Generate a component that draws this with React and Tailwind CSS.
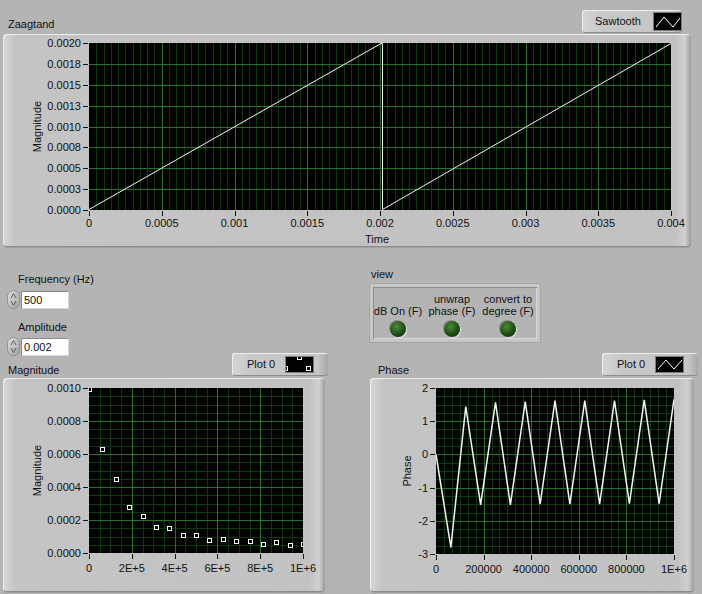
import React from "react";

const FONT = "Liberation Sans, Arial, sans-serif";

// grid lines between two major positions
const subdivide = (arr, n) => {
  const out = [];
  for (let i = 0; i < arr.length - 1; i++)
    for (let k = 1; k < n; k++) out.push(arr[i] + ((arr[i + 1] - arr[i]) * k) / n);
  return out;
};
const crisp = (v) => Math.round(v) + 0.5;

function Chart({ id, w, h, plot, xTicks, yTicks, xMinor, yMinor, yTitle, yTitleX, xTitle, labelY, children }) {
  const { x, y, w: pw, h: ph } = plot;
  const xs = xTicks.map((_, i) => x + (pw * i) / (xTicks.length - 1));
  const ys = yTicks.map((_, i) => y + ph - (ph * i) / (yTicks.length - 1));
  return (
    <svg width={w} height={h} className="block" fontFamily={FONT} fontSize="11">
      <defs>
        <clipPath id={id}>
          <rect x={x} y={y} width={pw} height={ph} />
        </clipPath>
      </defs>
      <rect x={x} y={y} width={pw} height={ph} fill="#010301" />
      <g shapeRendering="crispEdges">
        {subdivide(xs, xMinor).map((v, i) => (
          <line key={"a" + i} x1={crisp(v)} x2={crisp(v)} y1={y} y2={y + ph} stroke="#103810" />
        ))}
        {subdivide(ys, yMinor).map((v, i) => (
          <line key={"b" + i} y1={crisp(v)} y2={crisp(v)} x1={x} x2={x + pw} stroke="#103810" />
        ))}
        {xs.slice(1, -1).map((v, i) => (
          <line key={"c" + i} x1={crisp(v)} x2={crisp(v)} y1={y} y2={y + ph} stroke="#2a6f2a" />
        ))}
        {ys.slice(1, -1).map((v, i) => (
          <line key={"d" + i} y1={crisp(v)} y2={crisp(v)} x1={x} x2={x + pw} stroke="#2a6f2a" />
        ))}
        {xs.map((v, i) => (
          <line key={"e" + i} x1={crisp(v)} x2={crisp(v)} y1={y + ph + 1} y2={y + ph + 6} stroke="#111" />
        ))}
        {ys.map((v, i) => (
          <line key={"f" + i} y1={crisp(v)} y2={crisp(v)} x1={x - 6} x2={x - 1} stroke="#111" />
        ))}
      </g>
      <g clipPath={`url(#${id})`}>
        <g transform={`translate(${x} ${y})`}>{children}</g>
      </g>
      {xTicks.map((t, i) => (
        <text key={"x" + i} x={xs[i]} y={labelY} textAnchor="middle" fill="#111">
          {t}
        </text>
      ))}
      {yTicks.map((t, i) => (
        <text key={"y" + i} x={x - 8} y={ys[i] + 4} textAnchor="end" fill="#111">
          {t}
        </text>
      ))}
      <text transform={`translate(${yTitleX} ${y + ph / 2}) rotate(-90)`} textAnchor="middle" dy="0.35em" fill="#111">
        {yTitle}
      </text>
      {xTitle && (
        <text x={x + pw / 2 - 3} y={h - 4} textAnchor="middle" fill="#111">
          {xTitle}
        </text>
      )}
    </svg>
  );
}

function Frame({ className, children }) {
  return (
    <div
      className={`rounded-[4px] bg-[linear-gradient(90deg,#d8d8d8,#c4c4c4_12px,#c2c2c2_calc(100%_-_16px),#d0d0d0_calc(100%_-_6px),#9c9c9c)] shadow-[inset_1px_1px_0_#ececec,inset_0_-1px_0_#8a8a8a,0_1px_0_#a2a2a2] ${className}`}
    >
      {children}
    </div>
  );
}

function Legend({ label, className, textClass, swatchClass, children }) {
  return (
    <div
      className={`relative flex items-center h-[23px] rounded-[3px] bg-[linear-gradient(90deg,#d4d4d4,#c8c8c8_20px,#c6c6c6_calc(100%_-_10px),#a8a8a8)] shadow-[inset_1px_1px_0_#eeeeee,inset_0_-1px_0_#8c8c8c] ${className}`}
    >
      <span className={textClass}>{label}</span>
      <div className={`bg-black border border-[#7c7c7c] ${swatchClass}`}>{children}</div>
    </div>
  );
}

function NumCtl({ value, className }) {
  return (
    <div className={`flex items-center ${className}`}>
      <svg width="13" height="19" viewBox="0 0 13 19" className="block">
        <defs>
          <linearGradient id="spin" x1="0" y1="0" x2="1" y2="1">
            <stop offset="0" stopColor="#e2e2e2" />
            <stop offset="1" stopColor="#9e9e9e" />
          </linearGradient>
        </defs>
        <rect x="0.5" y="0.5" width="12" height="18" rx="6" fill="url(#spin)" stroke="#909090" />
        <path d="M4 8 L6.5 3.5 L9 8" fill="none" stroke="#5a5a5a" />
        <path d="M4 11 L6.5 15.5 L9 11" fill="none" stroke="#5a5a5a" />
        <line x1="2" x2="11" y1="9.5" y2="9.5" stroke="#c8c8c8" />
      </svg>
      <div className="ml-[1px] w-[47px] h-[17px] bg-white border-t border-l border-[#8a8a8a] shadow-[1px_1px_0_#d6d6d6] pl-[2px] pt-[2px]">
        {value}
      </div>
    </div>
  );
}

function Led({ lines, w }) {
  return (
    <div className={`flex flex-col items-center ${w}`}>
      <div className="text-center leading-[12px] whitespace-nowrap">
        {lines.map((l) => (
          <div key={l}>{l}</div>
        ))}
      </div>
      <div className="mt-[4px] w-[16px] h-[16px] rounded-full bg-[radial-gradient(circle_at_40%_35%,#4f8c3a,#1f4d15_55%,#0e2a08)] shadow-[1px_1px_1px_#e6e6e6,-1px_-1px_0_#8a8a8a]" />
    </div>
  );
}

const magnitudeY = [1, 61.3, 91.3, 118.7, 128.3, 139.3, 140.3, 147.3, 146.7, 151.7, 150.7, 153.3, 153.3, 155.7, 154.3, 157.3, 156.3];
const phaseY = [0, -2.8, 1.44, -1.52, 1.57, -1.52, 1.59, -1.5, 1.62, -1.5, 1.62, -1.5, 1.62, -1.48, 1.64, -1.48, 1.66];

export default function App() {
  return (
    <div className="w-[702px] h-[594px] overflow-hidden bg-[#b4b4b4] text-[11px] leading-[13px] text-[#111] font-['Liberation_Sans',Arial,sans-serif]">
      {/* Zaagtand */}
      <div className="flex items-end justify-between h-[34px] pl-[8px] pr-[20px]">
        <span className="mb-[3px]">Zaagtand</span>
        <Legend
          label="Sawtooth"
          className="w-[100px] mb-[1px]"
          textClass="ml-[13px] w-[58px]"
          swatchClass="w-[29px] h-[19px]"
        >
          <svg width="27" height="17" className="block">
            <polyline points="2,14 10,4 19,14 26,5" fill="none" stroke="#fff" strokeWidth="1" />
          </svg>
        </Legend>
      </div>
      <Frame className="ml-[3px] w-[688px] h-[213px]">
        <Chart
          id="saw"
          w={688}
          h={213}
          plot={{ x: 86, y: 9, w: 582, h: 167 }}
          xTicks={["0", "0.0005", "0.001", "0.0015", "0.002", "0.0025", "0.003", "0.0035", "0.004"]}
          yTicks={["0.0000", "0.0003", "0.0005", "0.0008", "0.0010", "0.0013", "0.0015", "0.0018", "0.0020"]}
          xMinor={10}
          yMinor={1}
          yTitle="Magnitude"
          yTitleX={34.5}
          xTitle="Time"
          labelY={193}
        >
          <polyline points="0,166.5 292,0.5 293.5,0.5 293.5,166.5 582,0.5" fill="none" stroke="#f4f4f4" strokeWidth="1" />
        </Chart>
      </Frame>

      {/* controls */}
      <div className="flex h-[106px]">
        <div className="w-[345px] pl-[7px] pt-[26px]">
          <div className="ml-[11px]">Frequency (Hz)</div>
          <NumCtl value="500" className="mt-[4px]" />
          <div className="ml-[11px] mt-[12px]">Amplitude</div>
          <NumCtl value="0.002" className="mt-[3px]" />
        </div>
        <div className="ml-[25px] pt-[21px]">
          <div className="ml-[1px]">view</div>
          <div className="mt-[3px] w-[170px] h-[58px] border-[3px] border-[#c6c6c6] shadow-[inset_1px_1px_0_#8e8e8e,inset_-1px_-1px_0_#dadada,0_0_0_1px_#a6a6a6] flex items-end pb-[2px]">
            <Led lines={["dB On (F)"]} w="w-[50px]" />
            <Led lines={["unwrap", "phase (F)"]} w="w-[58px]" />
            <Led lines={["convert to", "degree (F)"]} w="w-[54px]" />
          </div>
        </div>
      </div>

      {/* spectra */}
      <div className="flex">
        <div className="w-[345px]">
          <div className="flex justify-between h-[25px] pl-[8px] pr-[17px]">
            <span className="self-end mb-[1px]">Magnitude</span>
            <Legend
              label="Plot 0"
              className="w-[96px]"
              textClass="ml-[15px] w-[38px]"
              swatchClass="w-[29px] h-[17px]"
            >
              <svg width="27" height="15" className="block">
                <g fill="none" stroke="#fff">
                  <rect x="-2.5" y="9.5" width="4" height="4" />
                  <rect x="11.5" y="-1.5" width="4" height="4" />
                  <rect x="20.5" y="9.5" width="4" height="4" />
                </g>
              </svg>
            </Legend>
          </div>
          <Frame className="ml-[3px] w-[322px] h-[214px]">
            <Chart
              id="mag"
              w={322}
              h={214}
              plot={{ x: 86, y: 10, w: 214, h: 165 }}
              xTicks={["0", "2E+5", "4E+5", "6E+5", "8E+5", "1E+6"]}
              yTicks={["0.0000", "0.0002", "0.0004", "0.0006", "0.0008", "0.0010"]}
              xMinor={4}
              yMinor={4}
              yTitle="Magnitude"
              yTitleX={34.5}
              labelY={194}
            >
              {magnitudeY.map((v, i) => (
                <rect
                  key={i}
                  x={Math.round(i * 13.375) - 2 + 0.5}
                  y={Math.round(v) - 2 + 0.5}
                  width="4"
                  height="4"
                  fill="#000"
                  stroke="#fff"
                />
              ))}
            </Chart>
          </Frame>
        </div>
        <div className="flex-1">
          <div className="flex justify-between h-[25px] pl-[33px] pr-[4px]">
            <span className="self-end mb-[1px]">Phase</span>
            <Legend
              label="Plot 0"
              className="w-[96px]"
              textClass="ml-[15px] w-[38px]"
              swatchClass="w-[29px] h-[17px]"
            >
              <svg width="27" height="15" className="block">
                <polyline points="2,12 10,3 18,12 26,3" fill="none" stroke="#fff" />
              </svg>
            </Legend>
          </div>
          <Frame className="ml-[25px] w-[324px] h-[214px]">
            <Chart
              id="phase"
              w={324}
              h={214}
              plot={{ x: 66, y: 10, w: 238, h: 166 }}
              xTicks={["0", "200000", "400000", "600000", "800000", "1E+6"]}
              yTicks={["-3", "-2", "-1", "0", "1", "2"]}
              xMinor={6}
              yMinor={4}
              yTitle="Phase"
              yTitleX={37}
              labelY={195}
            >
              <polyline
                points={phaseY.map((v, i) => `${(i * 238) / 16},${(2 - v) * 33.2}`).join(" ")}
                fill="none"
                stroke="#f4f4f4"
                strokeWidth="1.5"
                strokeLinejoin="miter"
              />
            </Chart>
          </Frame>
        </div>
      </div>
    </div>
  );
}
